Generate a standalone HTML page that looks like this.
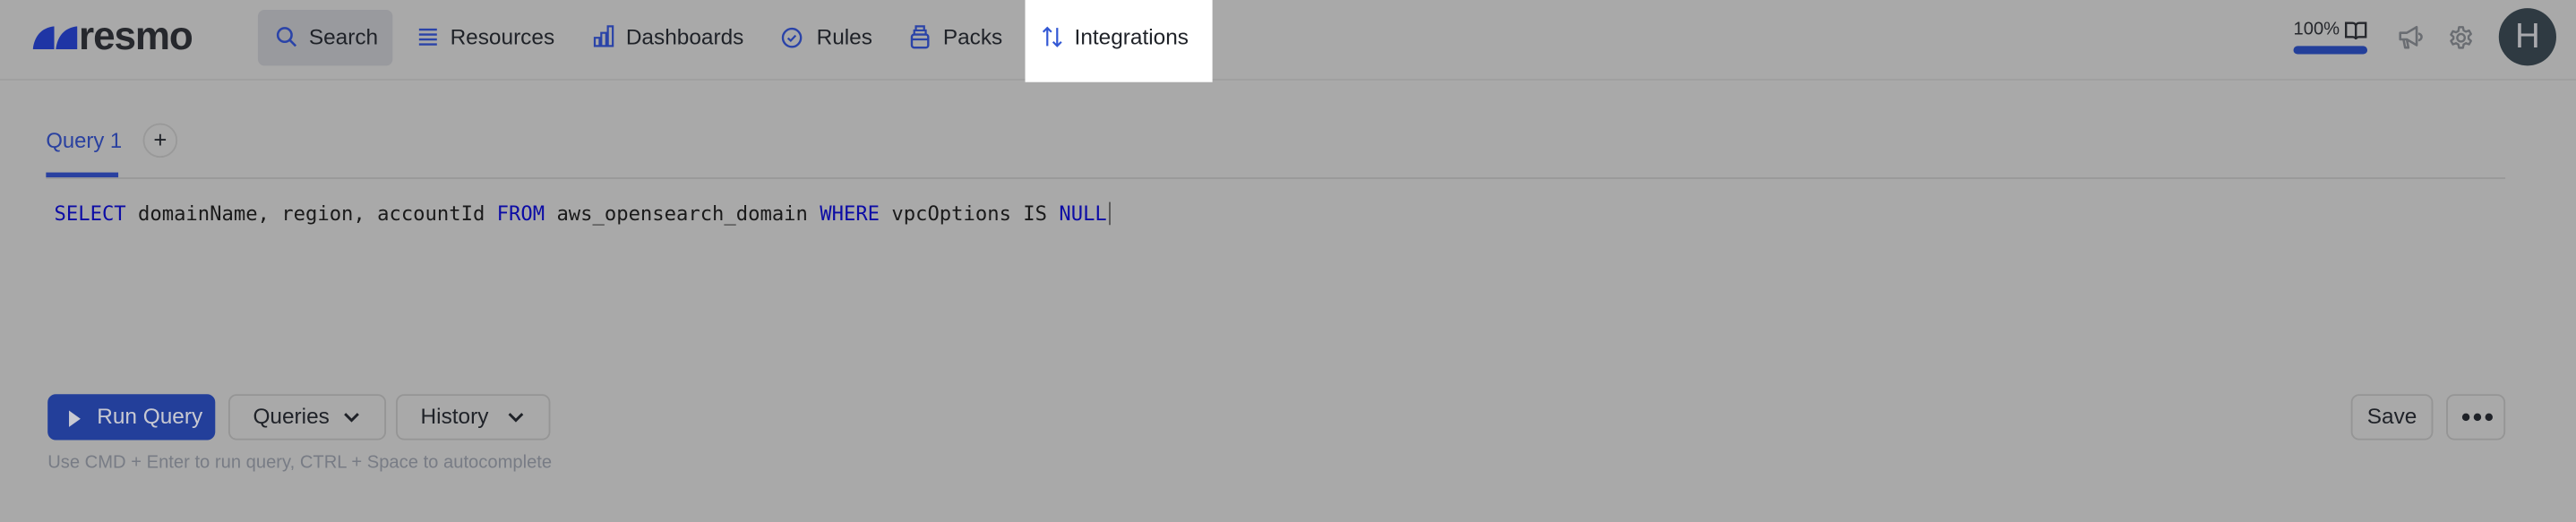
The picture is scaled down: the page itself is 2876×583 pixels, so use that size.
<!DOCTYPE html>
<html><head><meta charset="utf-8"><style>
html,body{margin:0;padding:0;width:2876px;height:582px;overflow:hidden;background:#a9a9a9}
#w{position:absolute;left:0;top:0;width:1568px;height:318px;transform:scale(1.83418);transform-origin:0 0;font-family:"Liberation Sans",sans-serif;color:#1f2228}
.a{position:absolute}
.nav{position:absolute;top:15px;font-size:13.3px;line-height:16px;color:#1f2228}
.btn{position:absolute;top:240px;height:28px;border:1px solid #959595;border-radius:5px;box-sizing:border-box;font-size:13.3px;line-height:26px;color:#1f2228}
svg{position:absolute}
</style></head><body><div id="w">
<div class="a" style="left:0;top:48px;width:1568px;height:1px;background:#a0a0a0"></div>
<div class="a" style="left:624px;top:0;width:114px;height:50px;background:#fff"></div>
<svg style="left:20px;top:16px" width="28" height="14" viewBox="0 0 28 14"><path d="M0 14 C1 6 5 1 13 0 L13 14 Z M14 14 C15 6 19 1 27 0 L27 14 Z" fill="#1f35a5"/></svg>
<div class="a" style="left:48px;top:9px;font-size:24px;font-weight:bold;color:#26282d;letter-spacing:-0.6px">resmo</div>
<div class="a" style="left:157px;top:6px;width:82px;height:34px;background:#999a9e;border-radius:4px"></div>
<svg style="left:168px;top:16px" width="13" height="13" viewBox="0 0 13 13"><circle cx="5.3" cy="5.3" r="4.2" fill="none" stroke="#2a43a8" stroke-width="1.4"/><path d="M8.5 8.5 L12 12" stroke="#2a43a8" stroke-width="1.4"/></svg>
<div class="nav" style="left:188px">Search</div>
<svg style="left:255px;top:17px" width="11" height="11" viewBox="0 0 11 11"><path d="M0 1h11M0 4h11M0 7h11M0 10h11" stroke="#2a43a8" stroke-width="1.3"/></svg>
<div class="nav" style="left:274px">Resources</div>
<svg style="left:361px;top:15px" width="13" height="14" viewBox="0 0 13 14"><path d="M1 8h3v5H1zM5 5h3v8H5zM9 1h3v12H9z" fill="none" stroke="#2a43a8" stroke-width="1.2"/></svg>
<div class="nav" style="left:381px">Dashboards</div>
<svg style="left:475px;top:16px" width="14" height="14" viewBox="0 0 14 14"><circle cx="7" cy="7" r="5.5" fill="none" stroke="#2a43a8" stroke-width="1.3"/><path d="M4.6 7.2l1.7 1.6 3-3.2" fill="none" stroke="#2a43a8" stroke-width="1.2"/></svg>
<div class="nav" style="left:497px">Rules</div>
<svg style="left:554px;top:15px" width="12" height="15" viewBox="0 0 12 15"><rect x="1" y="6" width="10" height="8" rx="1.5" fill="none" stroke="#2a43a8" stroke-width="1.3"/><path d="M2.5 6V3.5h7V6M3.5 3.5V1h5v2.5M1 9h10" fill="none" stroke="#2a43a8" stroke-width="1.2"/></svg>
<div class="nav" style="left:574px">Packs</div>
<svg style="left:634px;top:15px" width="13" height="15" viewBox="0 0 13 15"><path d="M3.5 13V2M1 4.5l2.5-2.5 2.5 2.5M9.5 2v11M7 10.5l2.5 2.5 2.5-2.5" fill="none" stroke="#3358d4" stroke-width="1.2"/></svg>
<div class="nav" style="left:654px">Integrations</div>
<div class="a" style="left:1396px;top:12px;font-size:11px;color:#26282d">100%</div>
<svg style="left:1427px;top:13px" width="14" height="12" viewBox="0 0 14 12"><path d="M1 1h4c1.2 0 2 .8 2 2v8c0-.8-.8-1.5-2-1.5H1zM13 1H9c-1.2 0-2 .8-2 2v8c0-.8.8-1.5 2-1.5h4z" fill="none" stroke="#26282d" stroke-width="1.3"/></svg>
<div class="a" style="left:1396px;top:28px;width:45px;height:5px;border-radius:3px;background:#233f9a"></div>
<svg style="left:1459px;top:15px" width="16" height="16" viewBox="0 0 16 16"><path d="M2 5h4l6-3.5v11L6 9H2zM4 9l1 5h2l-1-5M13 5.5a2 2 0 010 4" fill="none" stroke="#6a6d72" stroke-width="1.4" stroke-linejoin="round"/></svg>
<svg style="left:1490px;top:15px" width="16" height="16" viewBox="0 0 16 16"><circle cx="8" cy="8" r="2.3" fill="none" stroke="#6a6d72" stroke-width="1.3"/><path d="M6.8 1.5h2.4l.4 2 1.4.8 1.9-.7 1.2 2.1-1.5 1.3v1.6l1.5 1.3-1.2 2.1-1.9-.7-1.4.8-.4 2H6.8l-.4-2-1.4-.8-1.9.7-1.2-2.1 1.5-1.3V7.4L1.9 6.1l1.2-2.1 1.9.7 1.4-.8z" fill="none" stroke="#6a6d72" stroke-width="1.3" stroke-linejoin="round"/></svg>
<div class="a" style="left:1521px;top:5px;width:35px;height:35px;border-radius:50%;background:#2f3a42;color:#a9a9ad;font-size:21px;line-height:35px;text-align:center">H</div>
<div class="a" style="left:28px;top:78px;font-size:13px;color:#2a41a0">Query 1</div>
<div class="a" style="left:87px;top:75px;width:21px;height:21px;border:1px solid #999;border-radius:50%;box-sizing:border-box;text-align:center;line-height:18px;font-size:14px">+</div>
<div class="a" style="left:28px;top:108px;width:1497px;height:1px;background:#999"></div>
<div class="a" style="left:28px;top:105px;width:44px;height:2.5px;background:#2a41a0"></div>
<div class="a" style="left:33px;top:123px;font-family:'DejaVu Sans Mono','Liberation Mono',monospace;font-size:12.1px;color:#1a1a1a;white-space:pre"><span style="color:#0c0ca5">SELECT</span> domainName, region, accountId <span style="color:#0c0ca5">FROM</span> aws_opensearch_domain <span style="color:#0c0ca5">WHERE</span> vpcOptions IS <span style="color:#0c0ca5">NULL</span><span style="border-left:1px solid #555;margin-left:1px"></span></div>
<div class="btn" style="left:29px;width:102px;background:#233f9a;border-color:#233f9a;color:#c8c9d2"><span style="position:absolute;left:12px;top:9px;width:0;height:0;border-left:7px solid #c8c9d2;border-top:5px solid transparent;border-bottom:5px solid transparent"></span><span style="position:absolute;left:29px">Run Query</span></div>
<div class="btn" style="left:139px;width:96px"><span style="position:absolute;left:14px">Queries</span><svg style="left:69px;top:10px" width="10" height="7" viewBox="0 0 10 7"><path d="M1 1l4 4 4-4" fill="none" stroke="#1f2228" stroke-width="1.6"/></svg></div>
<div class="btn" style="left:241px;width:94px"><span style="position:absolute;left:14px">History</span><svg style="left:67px;top:10px" width="10" height="7" viewBox="0 0 10 7"><path d="M1 1l4 4 4-4" fill="none" stroke="#1f2228" stroke-width="1.6"/></svg></div>
<div class="btn" style="left:1431px;width:50px;text-align:center">Save</div>
<div class="btn" style="left:1489px;width:36px"><svg style="left:8px;top:10px" width="20" height="6" viewBox="0 0 20 6"><circle cx="3" cy="3" r="2.3" fill="#1f2228"/><circle cx="10" cy="3" r="2.3" fill="#1f2228"/><circle cx="17" cy="3" r="2.3" fill="#1f2228"/></svg></div>
<div class="a" style="left:29px;top:276px;font-size:11px;color:#787c85">Use CMD + Enter to run query, CTRL + Space to autocomplete</div>
</div></body></html>
